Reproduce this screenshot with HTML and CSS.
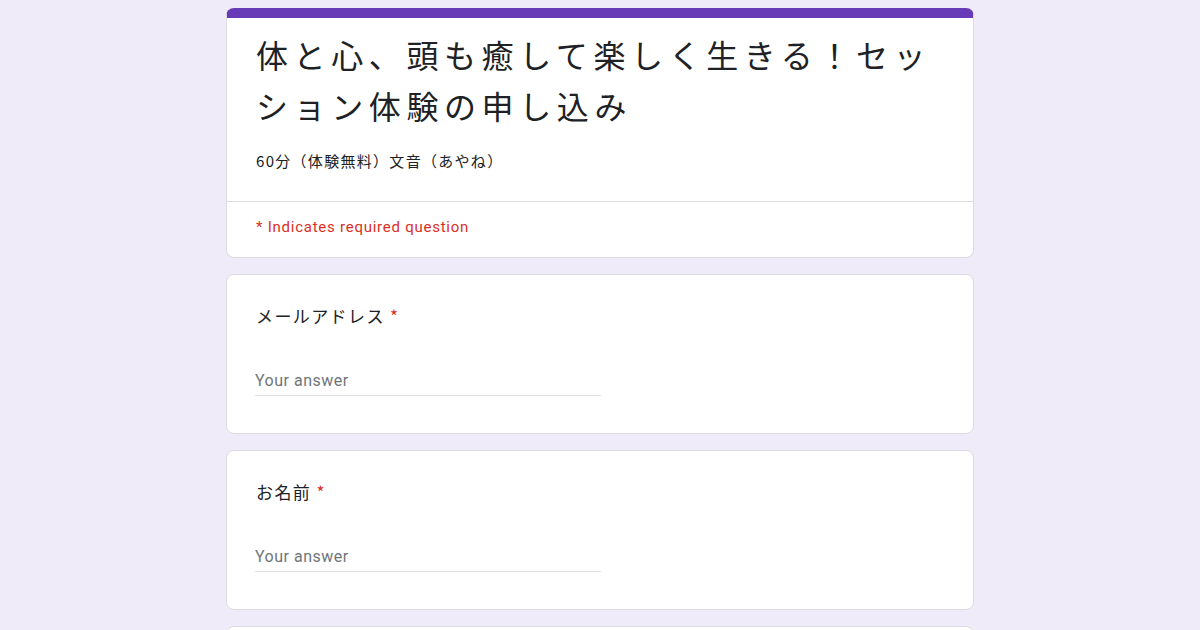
FILE: index.html
```html
<!DOCTYPE html>
<html lang="ja">
<head>
<meta charset="utf-8">
<link rel="stylesheet" href="styles.css">
</head>
<body>
<main class="form">
  <section class="card header-card">
    <div class="header-main">
      <h1 class="title">体と心、頭も癒して楽しく生きる！セッション体験の申し込み</h1>
      <p class="desc">60分（体験無料）文音（あやね）</p>
    </div>
    <div class="required-note">* Indicates required question</div>
  </section>
  <section class="card question">
    <div class="q-label">メールアドレス <span class="star">*</span></div>
    <div class="answer">Your answer</div>
  </section>
  <section class="card question">
    <div class="q-label">お名前 <span class="star">*</span></div>
    <div class="answer">Your answer</div>
  </section>
  <section class="card question"></section>
</main>
</body>
</html>
```
FILE: styles.css
```css
html, body {
  margin: 0;
  padding: 0;
}
body {
  background: #f0ebf8;
  font-family: "Noto Sans CJK JP", Roboto, "Noto Sans", sans-serif;
  color: #202124;
  height: 630px;
  overflow: hidden;
}
.form {
  width: 748px;
  margin: 8px auto 0;
  display: flex;
  flex-direction: column;
  gap: 16px;
}
.card {
  background: #fff;
  border: 1px solid #dcdbe3;
  border-radius: 8px;
  box-sizing: border-box;
}
.header-card {
  border-top: 10px solid #673ab7;
}
.header-main {
  padding: 11px 29px 30px;
  border-bottom: 1px solid #dadce0;
}
.title {
  margin: 0;
  font-weight: 400;
  font-size: 32px;
  line-height: 51px;
  letter-spacing: 5.6px;
}
.desc {
  margin: 20px 0 0;
  font-size: 15px;
  line-height: 20px;
  letter-spacing: 1.3px;
}
.required-note {
  padding: 14px 29px 19px;
  color: #d93025;
  font-family: Roboto, sans-serif;
  font-size: 15px;
  line-height: 22px;
  letter-spacing: 0.75px;
}
.question {
  height: 160px;
  padding: 29px 29px 0;
}
.q-label {
  font-size: 17px;
  line-height: 24px;
  letter-spacing: 1.4px;
}
.star {
  color: #d93025;
  letter-spacing: 0;
}
.answer {
  margin-top: 42px;
  margin-left: -1px;
  width: 346px;
  font-family: Roboto, sans-serif;
  font-size: 16px;
  letter-spacing: 0.5px;
  color: #70757a;
  line-height: 22px;
  padding-bottom: 3px;
  border-bottom: 1px solid #e0e0e0;
}
```
